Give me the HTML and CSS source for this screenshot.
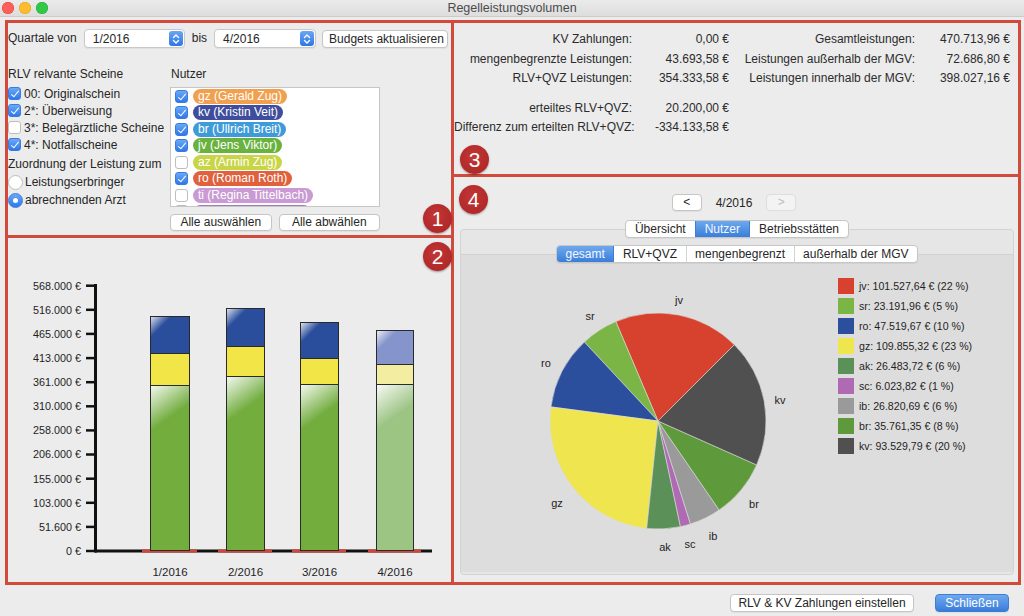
FILE: index.html
```html
<!DOCTYPE html>
<html lang="de">
<head>
<meta charset="utf-8">
<title>Regelleistungsvolumen</title>
<link rel="stylesheet" href="styles.css">
</head>
<body>
<div class="window">
  <header class="titlebar">
    <div class="lights"><span class="light red"></span><span class="light yellow"></span><span class="light green"></span></div>
    <div class="title">Regelleistungsvolumen</div>
    <div></div>
  </header>

  <main class="frame">
    <div class="col col-left">
      <section class="cell cell-filter">
        <div class="toolbar">
          <span class="lbl">Quartale von</span>
          <div class="select select-a"><span>1/2016</span><span class="stepper"><svg width="14" height="16" viewBox="0 0 14 16"><path d="M4.5 6.5 7 4 9.5 6.5M4.5 9.5 7 12 9.5 9.5" fill="none" stroke="#fff" stroke-width="1.4" stroke-linecap="round" stroke-linejoin="round"/></svg></span></div>
          <span class="lbl">bis</span>
          <div class="select select-b"><span>4/2016</span><span class="stepper"><svg width="14" height="16" viewBox="0 0 14 16"><path d="M4.5 6.5 7 4 9.5 6.5M4.5 9.5 7 12 9.5 9.5" fill="none" stroke="#fff" stroke-width="1.4" stroke-linecap="round" stroke-linejoin="round"/></svg></span></div>
          <button class="btn btn-budget">Budgets aktualisieren</button>
        </div>
        <div class="filter-body">
          <div class="scheine">
            <div class="head">RLV relvante Scheine</div>
            <div class="check-row"><span class="cb on"></span>00: Originalschein</div>
            <div class="check-row"><span class="cb on"></span>2*: Überweisung</div>
            <div class="check-row"><span class="cb"></span>3*: Belegärztliche Scheine</div>
            <div class="check-row"><span class="cb on"></span>4*: Notfallscheine</div>
            <div class="head head-zuord">Zuordnung der Leistung zum</div>
            <div class="radio-row"><span class="rb"></span>Leistungserbringer</div>
            <div class="radio-row"><span class="rb on"></span>abrechnenden Arzt</div>
          </div>
          <div class="nutzer">
            <div class="head">Nutzer</div>
            <div class="userlist">
              <div class="user-row"><span class="cb on"></span><span class="pill pill-gz">gz (Gerald Zug)</span></div>
              <div class="user-row"><span class="cb on"></span><span class="pill pill-kv">kv (Kristin Veit)</span></div>
              <div class="user-row"><span class="cb on"></span><span class="pill pill-br">br (Ullrich Breit)</span></div>
              <div class="user-row"><span class="cb on"></span><span class="pill pill-jv">jv (Jens Viktor)</span></div>
              <div class="user-row"><span class="cb"></span><span class="pill pill-az">az (Armin Zug)</span></div>
              <div class="user-row"><span class="cb on"></span><span class="pill pill-ro">ro (Roman Roth)</span></div>
              <div class="user-row"><span class="cb"></span><span class="pill pill-ti">ti (Regina Tittelbach)</span></div>
              <div class="user-row user-row-cut"><span class="cb"></span><span class="pill pill-sc"></span></div>
            </div>
            <div class="list-buttons">
              <button class="btn btn-list">Alle auswählen</button>
              <button class="btn btn-list">Alle abwählen</button>
            </div>
          </div>
        </div>
      </section>

      <section class="cell cell-chart">
        <svg class="barchart" width="443" height="344" viewBox="0 0 443 344">
          <defs>
            <linearGradient id="g1" gradientUnits="userSpaceOnUse" x1="142" y1="147" x2="164" y2="178">
              <stop offset="0" stop-color="#fff" stop-opacity="0.95"/><stop offset="1" stop-color="#fff" stop-opacity="0"/>
            </linearGradient>
            <linearGradient id="g2" gradientUnits="userSpaceOnUse" x1="218" y1="138" x2="240" y2="169">
              <stop offset="0" stop-color="#fff" stop-opacity="0.95"/><stop offset="1" stop-color="#fff" stop-opacity="0"/>
            </linearGradient>
            <linearGradient id="g3" gradientUnits="userSpaceOnUse" x1="292" y1="146" x2="314" y2="177">
              <stop offset="0" stop-color="#fff" stop-opacity="0.95"/><stop offset="1" stop-color="#fff" stop-opacity="0"/>
            </linearGradient>
            <linearGradient id="g4" gradientUnits="userSpaceOnUse" x1="368" y1="146" x2="390" y2="177">
              <stop offset="0" stop-color="#fff" stop-opacity="0.95"/><stop offset="1" stop-color="#fff" stop-opacity="0"/>
            </linearGradient>
            <linearGradient id="b1" gradientUnits="userSpaceOnUse" x1="142" y1="78" x2="153" y2="89">
              <stop offset="0" stop-color="#fff" stop-opacity="0.9"/><stop offset="1" stop-color="#fff" stop-opacity="0"/>
            </linearGradient>
            <linearGradient id="b2" gradientUnits="userSpaceOnUse" x1="218" y1="70" x2="229" y2="81">
              <stop offset="0" stop-color="#fff" stop-opacity="0.9"/><stop offset="1" stop-color="#fff" stop-opacity="0"/>
            </linearGradient>
            <linearGradient id="b3" gradientUnits="userSpaceOnUse" x1="292" y1="84" x2="303" y2="95">
              <stop offset="0" stop-color="#fff" stop-opacity="0.9"/><stop offset="1" stop-color="#fff" stop-opacity="0"/>
            </linearGradient>
            <linearGradient id="b4" gradientUnits="userSpaceOnUse" x1="368" y1="92" x2="379" y2="103">
              <stop offset="0" stop-color="#fff" stop-opacity="0.9"/><stop offset="1" stop-color="#fff" stop-opacity="0"/>
            </linearGradient>
          </defs>
          <g class="ticks" stroke="#111" stroke-width="2.5">
            <line x1="78" y1="47.7" x2="88" y2="47.7"/>
            <line x1="78" y1="71.8" x2="88" y2="71.8"/>
            <line x1="78" y1="95.9" x2="88" y2="95.9"/>
            <line x1="78" y1="120.1" x2="88" y2="120.1"/>
            <line x1="78" y1="144.2" x2="88" y2="144.2"/>
            <line x1="78" y1="168.3" x2="88" y2="168.3"/>
            <line x1="78" y1="192.4" x2="88" y2="192.4"/>
            <line x1="78" y1="216.5" x2="88" y2="216.5"/>
            <line x1="78" y1="240.7" x2="88" y2="240.7"/>
            <line x1="78" y1="264.8" x2="88" y2="264.8"/>
            <line x1="78" y1="288.9" x2="88" y2="288.9"/>
            <line x1="78" y1="313" x2="88" y2="313"/>
          </g>
          <g class="ylabels" text-anchor="end">
            <text x="73" y="51.5">568.000 €</text>
            <text x="73" y="75.6">516.000 €</text>
            <text x="73" y="99.7">465.000 €</text>
            <text x="73" y="123.9">413.000 €</text>
            <text x="73" y="148">361.000 €</text>
            <text x="73" y="172.1">310.000 €</text>
            <text x="73" y="196.2">258.000 €</text>
            <text x="73" y="220.3">206.000 €</text>
            <text x="73" y="244.5">155.000 €</text>
            <text x="73" y="268.6">103.000 €</text>
            <text x="73" y="292.7">51.600 €</text>
            <text x="73" y="316.8">0 €</text>
          </g>
          <line x1="87.5" y1="46" x2="87.5" y2="314.5" stroke="#111" stroke-width="3"/>
          <line x1="87" y1="313" x2="424" y2="313" stroke="#111" stroke-width="3"/>
          <g stroke="#d0463a" stroke-width="3">
            <line x1="134" y1="313" x2="189" y2="313"/>
            <line x1="210" y1="313" x2="264" y2="313"/>
            <line x1="284" y1="313" x2="338" y2="313"/>
            <line x1="360" y1="313" x2="413" y2="313"/>
          </g>
          <g class="bars" stroke="#2a2a2a" stroke-width="1">
            <rect x="142.5" y="147.5" width="39" height="165" fill="#72ad3e"/>
            <rect x="143" y="148" width="38" height="164" fill="url(#g1)" stroke="none"/>
            <rect x="142.5" y="115.5" width="39" height="32" fill="#f1e548"/>
            <rect x="142.5" y="78.5" width="39" height="37" fill="#2b4e9c"/>
            <rect x="143" y="79" width="38" height="36" fill="url(#b1)" stroke="none"/>

            <rect x="218.5" y="138.5" width="38" height="174" fill="#72ad3e"/>
            <rect x="219" y="139" width="37" height="173" fill="url(#g2)" stroke="none"/>
            <rect x="218.5" y="108.5" width="38" height="30" fill="#f1e548"/>
            <rect x="218.5" y="70.5" width="38" height="38" fill="#2b4e9c"/>
            <rect x="219" y="71" width="37" height="37" fill="url(#b2)" stroke="none"/>

            <rect x="292.5" y="146.5" width="38" height="166" fill="#72ad3e"/>
            <rect x="293" y="147" width="37" height="165" fill="url(#g3)" stroke="none"/>
            <rect x="292.5" y="120.5" width="38" height="26" fill="#f1e548"/>
            <rect x="292.5" y="84.5" width="38" height="36" fill="#2b4e9c"/>
            <rect x="293" y="85" width="37" height="35" fill="url(#b3)" stroke="none"/>

            <rect x="368.5" y="146.5" width="37" height="166" fill="#9cc483"/>
            <rect x="369" y="147" width="36" height="165" fill="url(#g4)" stroke="none"/>
            <rect x="368.5" y="126.5" width="37" height="20" fill="#f2eda0"/>
            <rect x="368.5" y="92.5" width="37" height="34" fill="#8595cc"/>
            <rect x="369" y="93" width="36" height="33" fill="url(#b4)" stroke="none"/>
          </g>
          <g class="xlabels" text-anchor="middle">
            <text x="162" y="338">1/2016</text>
            <text x="237.5" y="338">2/2016</text>
            <text x="311.5" y="338">3/2016</text>
            <text x="387" y="338">4/2016</text>
          </g>
        </svg>
      </section>
    </div>

    <div class="col col-right">
      <section class="cell cell-stats">
        <div class="stats stats-left">
          <span class="k">KV Zahlungen:</span><span class="v">0,00 €</span>
          <span class="k">mengenbegrenzte Leistungen:</span><span class="v">43.693,58 €</span>
          <span class="k">RLV+QVZ Leistungen:</span><span class="v">354.333,58 €</span>
          <span class="spacer"></span>
          <span class="k">erteiltes RLV+QVZ:</span><span class="v">20.200,00 €</span>
          <span class="k">Differenz zum erteilten RLV+QVZ:</span><span class="v">-334.133,58 €</span>
        </div>
        <div class="stats stats-right">
          <span class="k">Gesamtleistungen:</span><span class="v">470.713,96 €</span>
          <span class="k">Leistungen außerhalb der MGV:</span><span class="v">72.686,80 €</span>
          <span class="k">Leistungen innerhalb der MGV:</span><span class="v">398.027,16 €</span>
        </div>
      </section>

      <section class="cell cell-pie">
        <div class="nav">
          <button class="btn btn-nav">&lt;</button>
          <span class="nav-label">4/2016</span>
          <button class="btn btn-nav disabled">&gt;</button>
        </div>
        <div class="tabbox">
          <div class="seg seg-main">
            <span>Übersicht</span><span class="sel">Nutzer</span><span>Betriebsstätten</span>
          </div>
          <div class="innerbox">
            <div class="seg seg-sub">
              <span class="sel">gesamt</span><span>RLV+QVZ</span><span>mengenbegrenzt</span><span>außerhalb der MGV</span>
            </div>
            <div class="pie-row">
              <svg class="pie" width="370" height="306" viewBox="0 0 370 306">
                <g transform="translate(-1,0)" stroke="#dcdcdc" stroke-width="0.6">
                  <path d="M198 156 L274.37 79.63 A108 108 0 0 0 155.80 56.58 Z" fill="#d6422d"/>
                  <path d="M198 156 L155.80 56.58 A108 108 0 0 0 124.34 77.01 Z" fill="#7bb545"/>
                  <path d="M198 156 L124.34 77.01 A108 108 0 0 0 90.93 141.91 Z" fill="#2c4f9d"/>
                  <path d="M198 156 L90.93 141.91 A108 108 0 0 0 186.71 263.41 Z" fill="#efe54f"/>
                  <path d="M198 156 L186.71 263.41 A108 108 0 0 0 220.45 261.64 Z" fill="#5b9158"/>
                  <path d="M198 156 L220.45 261.64 A108 108 0 0 0 230.48 259.00 Z" fill="#b06ab3"/>
                  <path d="M198 156 L230.48 259.00 A108 108 0 0 0 259.17 245.00 Z" fill="#9a9a9a"/>
                  <path d="M198 156 L259.17 245.00 A108 108 0 0 0 296.66 199.93 Z" fill="#5e9a3b"/>
                  <path d="M198 156 L296.66 199.93 A108 108 0 0 0 274.37 79.63 Z" fill="#505050"/>
                </g>
                <g class="plabels" text-anchor="middle" transform="translate(-1,0)">
                  <text x="219" y="38.5">jv</text>
                  <text x="130" y="54.5">sr</text>
                  <text x="86" y="102">ro</text>
                  <text x="320" y="139">kv</text>
                  <text x="294" y="243">br</text>
                  <text x="253" y="275">ib</text>
                  <text x="230" y="283">sc</text>
                  <text x="205" y="286">ak</text>
                  <text x="97" y="242">gz</text>
                </g>
              </svg>
              <ul class="legend">
                <li><span class="sw sw-jv"></span>jv: 101.527,64 € (22 %)</li>
                <li><span class="sw sw-sr"></span>sr: 23.191,96 € (5 %)</li>
                <li><span class="sw sw-ro"></span>ro: 47.519,67 € (10 %)</li>
                <li><span class="sw sw-gz"></span>gz: 109.855,32 € (23 %)</li>
                <li><span class="sw sw-ak"></span>ak: 26.483,72 € (6 %)</li>
                <li><span class="sw sw-sc"></span>sc: 6.023,82 € (1 %)</li>
                <li><span class="sw sw-ib"></span>ib: 26.820,69 € (6 %)</li>
                <li><span class="sw sw-br"></span>br: 35.761,35 € (8 %)</li>
                <li><span class="sw sw-kv"></span>kv: 93.529,79 € (20 %)</li>
              </ul>
            </div>
          </div>
        </div>
      </section>
    </div>

    <span class="badge badge-1">1</span>
    <span class="badge badge-2">2</span>
    <span class="badge badge-3">3</span>
    <span class="badge badge-4">4</span>
  </main>

  <footer class="bottombar">
    <button class="btn btn-foot">RLV &amp; KV Zahlungen einstellen</button>
    <button class="btn btn-foot btn-primary">Schließen</button>
  </footer>
</div>
</body>
</html>
```

FILE: styles.css
```css
* { box-sizing: border-box; margin: 0; padding: 0; }
html, body { width: 1024px; height: 616px; overflow: hidden; }
body {
  background: #ececec;
  font-family: "Liberation Sans", Arial, Helvetica, sans-serif;
  font-size: 12px;
  color: #262626;
}
button { font: inherit; color: inherit; cursor: default; }

.window { display: flex; flex-direction: column; height: 616px; }

/* title bar */
.titlebar {
  flex: none;
  height: 17px;
  display: grid;
  grid-template-columns: 1fr auto 1fr;
  align-items: center;
  background: linear-gradient(#ebebeb, #dddddd);
  border-bottom: 1px solid #cbcbcb;
}
.lights { display: flex; gap: 5px; padding-left: 2px; }
.light { width: 12px; height: 12px; border-radius: 50%; }
.light.red { background: #fc5f57; box-shadow: inset 0 0 0 0.5px #e0443e; }
.light.yellow { background: #fdbc2e; box-shadow: inset 0 0 0 0.5px #dea123; }
.light.green { background: #33c748; box-shadow: inset 0 0 0 0.5px #27aa35; }
.title { font-size: 12.5px; color: #4b4b4b; }

/* red frame */
.frame {
  position: relative;
  flex: none;
  display: flex;
  gap: 3px;
  width: 1016px;
  height: 565px;
  margin: 3px 0 0 5px;
  padding: 3px;
  background: #d14a3b;
}
.col { display: flex; flex-direction: column; gap: 3px; }
.col-left { width: 443px; }
.col-right { width: 564px; }
.cell { background: #ececec; }
.cell-filter { height: 212px; padding-top: 6px; }
.cell-chart { flex: 1; }
.cell-stats { height: 151px; }
.cell-pie { flex: 1; }

/* filter toolbar */
.toolbar { display: flex; align-items: center; height: 19px; gap: 7px; }
.lbl { line-height: 19px; }
.select {
  display: flex;
  align-items: center;
  justify-content: space-between;
  height: 19px;
  padding: 0 1px 0 8px;
  background: #fff;
  border: 1px solid #c8c8c8;
  border-radius: 4px;
  box-shadow: 0 1px 1px rgba(0,0,0,0.06);
}
.select-a { width: 101px; }
.select-b { width: 102px; }
.stepper {
  display: block;
  width: 14px;
  height: 15px;
  border-radius: 3px;
  background: linear-gradient(#69a7f2, #2f76e6);
}
.stepper svg { display: block; margin-top: -0.5px; }

.btn {
  height: 18px;
  background: #fff;
  border: 1px solid #c5c5c5;
  border-radius: 4px;
  box-shadow: 0 1px 1px rgba(0,0,0,0.06);
  padding: 0 6px;
  line-height: 16px;
  white-space: nowrap;
}
.btn-budget { width: 126px; margin-left: -1px; }

/* filter body */
.filter-body { display: flex; margin-top: 18px; }
.scheine { width: 162px; }
.head { height: 17px; line-height: 17px; margin-bottom: 2px; }
.head-zuord { margin-top: 3px; margin-bottom: 0; }
.check-row { display: flex; align-items: center; gap: 3px; height: 17px; white-space: nowrap; }
.radio-row { display: flex; align-items: center; gap: 2px; height: 18px; white-space: nowrap; }

.cb {
  position: relative;
  flex: none;
  width: 13px;
  height: 13px;
  border-radius: 3px;
  background: #fff;
  border: 1px solid #bdbdbd;
}
.cb.on { background: linear-gradient(#6aa9f4, #2f78ea); border-color: #3a7be0; }
.cb.on::after {
  content: "";
  position: absolute;
  left: 3.5px;
  top: 1px;
  width: 3px;
  height: 7px;
  border: solid #fff;
  border-width: 0 1.6px 1.6px 0;
  transform: rotate(40deg);
}
.rb {
  position: relative;
  flex: none;
  width: 15px;
  height: 15px;
  border-radius: 50%;
  background: #fff;
  border: 1px solid #bdbdbd;
}
.rb.on { background: linear-gradient(#6aa9f4, #2f78ea); border-color: #3a7be0; }
.rb.on::after {
  content: "";
  position: absolute;
  left: 4px;
  top: 4px;
  width: 5px;
  height: 5px;
  border-radius: 50%;
  background: #fff;
}

.nutzer { width: 210px; }
.nutzer .head { padding-left: 1px; margin-bottom: 4px; }
.userlist {
  height: 120px;
  overflow: hidden;
  background: #fff;
  border: 1px solid #c6c6c6;
  padding-left: 4px;
}
.user-row { display: flex; align-items: center; height: 16.5px; }
.pill {
  margin-left: 5px;
  height: 15px;
  line-height: 15px;
  padding: 0 5px;
  border-radius: 8px;
  color: #fff;
  white-space: nowrap;
}
.user-row-cut { align-items: flex-start; padding-top: 1px; }
.pill-gz { background: #f0a04e; }
.pill-kv { background: #3e4d9c; }
.pill-br { background: #3f9bd8; }
.pill-jv { background: #69b23f; }
.pill-az { background: #c8d548; }
.pill-ro { background: #e0613b; }
.pill-ti { background: #c99ad3; }
.pill-sc { background: #a878c0; width: 118px; }
.list-buttons { display: flex; gap: 7px; margin-top: 7px; }
.btn-list { width: 102px; height: 17px; line-height: 15px; }

/* bar chart */
.barchart { display: block; }
.barchart text { font-family: "Liberation Sans", Arial, sans-serif; font-size: 10.8px; fill: #1e1e1e; }
.barchart .xlabels text { font-size: 11.5px; }

/* stats */
.cell-stats { display: flex; padding-top: 7px; }
.stats {
  display: grid;
  grid-auto-rows: 19.5px;
  line-height: 19.5px;
  align-content: start;
  color: #2b2b2b;
  white-space: nowrap;
}
.stats-left { grid-template-columns: 178px 89px; column-gap: 8px; }
.stats-right { grid-template-columns: 175px 85px; column-gap: 10px; margin-left: 11px; }
.stats .k, .stats .v { text-align: right; }
.stats .spacer { grid-column: span 2; height: 10px; }
.stats-left { grid-template-rows: 19.5px 19.5px 19.5px 10px 19.5px 19.5px; }

/* pie cell */
.cell-pie { display: flex; flex-direction: column; padding-top: 17px; }
.nav { display: flex; align-items: center; justify-content: center; height: 17px; padding-right: 4px; }
.btn-nav { width: 30px; height: 17px; line-height: 15px; padding: 0; }
.btn-nav.disabled { color: #bdbdbd; background: #f3f3f3; border-color: #dedede; box-shadow: none; }
.nav-label { margin: 0 14px; }

.tabbox {
  flex: 1;
  display: flex;
  flex-direction: column;
  align-items: center;
  margin: 18px 4px 7px 6px;
  background: #e6e6e6;
  border: 1px solid #d3d3d3;
  border-radius: 4px;
}
.seg {
  display: flex;
  height: 18px;
  background: #fff;
  border: 1px solid #c6c6c6;
  border-radius: 4px;
  overflow: hidden;
  box-shadow: 0 1px 1px rgba(0,0,0,0.06);
  flex: none;
}
.seg span { padding: 0 9px; line-height: 16px; border-left: 1px solid #d4d4d4; white-space: nowrap; }
.seg span:first-child { border-left: 0; }
.seg .sel { background: linear-gradient(#6ea9ee, #3b7ed9); color: #f4f8ff; border-left-color: #3b7ed9; }
.seg .sel + span { border-left-color: #3b7ed9; }
.seg-main { margin-top: -10px; }
.seg-sub span { padding: 0 8.5px; }

.innerbox {
  align-self: stretch;
  flex: 1;
  display: flex;
  flex-direction: column;
  align-items: center;
  margin: 16px 0 2px;
  background: #dddddd;
  border-top: 1px solid #d2d2d2;
}
.seg-sub { margin-top: -10px; }
.pie-row { align-self: stretch; display: flex; margin-top: 2px; }
.pie { display: block; flex: none; }
.pie text { font-family: "Liberation Sans", Arial, sans-serif; font-size: 11px; fill: #222; }

.legend { list-style: none; margin-left: 7px; padding-top: 11px; }
.legend li { display: flex; align-items: center; gap: 5px; height: 20px; font-size: 10.6px; color: #1f1f1f; white-space: nowrap; }
.sw { width: 16px; height: 16px; flex: none; }
.sw-jv { background: #d6422d; }
.sw-sr { background: #7bb545; }
.sw-ro { background: #2c4f9d; }
.sw-gz { background: #efe54f; }
.sw-ak { background: #5b9158; }
.sw-sc { background: #b06ab3; }
.sw-ib { background: #9a9a9a; }
.sw-br { background: #5e9a3b; }
.sw-kv { background: #505050; }

/* numbered badges over the frame */
.badge {
  position: absolute;
  width: 29px;
  height: 29px;
  border-radius: 50%;
  background: radial-gradient(circle at 45% 40%, #c33636, #a82323);
  color: #fff;
  font-family: "Liberation Sans Narrow", "Liberation Sans", Arial, sans-serif;
  font-size: 21px;
  line-height: 29px;
  text-align: center;
  box-shadow: 0 1px 2px rgba(0,0,0,0.35);
}
.badge-1 { left: 418px; top: 184px; }
.badge-2 { left: 418px; top: 222px; }
.badge-3 { left: 455px; top: 125px; }
.badge-4 { left: 454px; top: 165px; }

/* bottom bar */
.bottombar { flex: 1; display: flex; justify-content: flex-end; align-items: flex-start; gap: 21px; padding: 9px 15px 0 0; }
.btn-foot { height: 18px; }
.btn-foot:first-child { width: 184px; }
.btn-primary { width: 74px; color: #fff; background: linear-gradient(#6ea9ee, #3a7cdb); border-color: #3f7cd4; }
```
